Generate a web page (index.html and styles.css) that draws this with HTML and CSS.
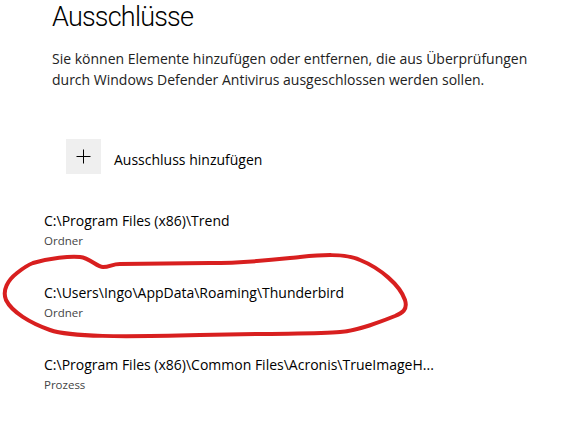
FILE: index.html
```html
<!DOCTYPE html>
<html lang="de">
<head>
<meta charset="utf-8">
<title>Ausschlüsse</title>
<link rel="stylesheet" href="styles.css">
</head>
<body>
<main class="page">
  <h1 class="title">Ausschlüsse</h1>
  <p class="desc">Sie können Elemente hinzufügen oder entfernen, die aus Überprüfungen durch Windows Defender Antivirus ausgeschlossen werden sollen.</p>
  <div class="add">
    <span class="add-btn">
      <svg width="35" height="35" viewBox="0 0 35 35" aria-hidden="true"><path d="M17.5 10.5v14M10.5 17.5h14" stroke="#000" stroke-width="1" fill="none"/></svg>
    </span>
    <span class="add-label">Ausschluss hinzufügen</span>
  </div>
  <ul class="list">
    <li class="item"><div class="path">C:\Program Files (x86)\Trend</div><div class="type">Ordner</div></li>
    <li class="item"><div class="path">C:\Users\Ingo\AppData\Roaming\Thunderbird</div><div class="type">Ordner</div></li>
    <li class="item"><div class="path">C:\Program Files (x86)\Common Files\Acronis\TrueImageH...</div><div class="type">Prozess</div></li>
  </ul>
</main>
<svg class="markup" width="571" height="426" viewBox="0 0 571 426" aria-hidden="true">
  <path d="M33 263 C50 258,70 256,80 257 C90 258,97 267,103 267 C110 267,112 264,120 264 L210 263 C250 263,280 259,300 257 C320 255,345 253,360 260 C380 268,400 285,405 300 C408 310,402 313,395 316 C380 322,360 330,340 332 C320 334,300 333,200 335 C120 337,70 337,50 330 C30 323,12 312,6 300 C2 290,8 280,17 273 C22 269,28 265,33 263 Z" fill="none" stroke="#d81f1f" stroke-width="4" stroke-linecap="round" stroke-linejoin="round"/>
</svg>
</body>
</html>
```
FILE: styles.css
```css
html, body {
  margin: 0;
  padding: 0;
  background: #fff;
}
body {
  font-family: "Open Sans", "Noto Sans", sans-serif;
  color: #000;
  width: 571px;
  height: 426px;
  overflow: hidden;
  position: relative;
}
.page {
  padding: 0 0 0 52px;
}
.title {
  margin: 0;
  font-family: "Roboto", "Open Sans", sans-serif;
  font-weight: 300;
  font-size: 27px;
  line-height: 34px;
  letter-spacing: -0.8px;
  color: #000;
}
.desc {
  margin: 14px 0 0 0;
  width: 490px;
  font-size: 14px;
  line-height: 21px;
  color: #222;
}
.add {
  display: flex;
  align-items: center;
  gap: 13px;
  margin: 49px 0 0 14px;
}
.add-btn {
  display: block;
  width: 35px;
  height: 35px;
  background: #efefef;
}
.add-btn svg {
  display: block;
}
.add-label {
  font-size: 14px;
  padding-top: 5px;
}
.list {
  list-style: none;
  margin: 37px 0 0 -8px;
  padding: 0;
  display: flex;
  flex-direction: column;
  gap: 33px;
}
.item {
  display: flex;
  flex-direction: column;
}
.path {
  font-size: 14px;
  line-height: 20px;
}
.type {
  font-size: 11.5px;
  line-height: 19px;
  color: #444;
}
.markup {
  position: absolute;
  left: 0;
  top: 0;
  pointer-events: none;
}
```
